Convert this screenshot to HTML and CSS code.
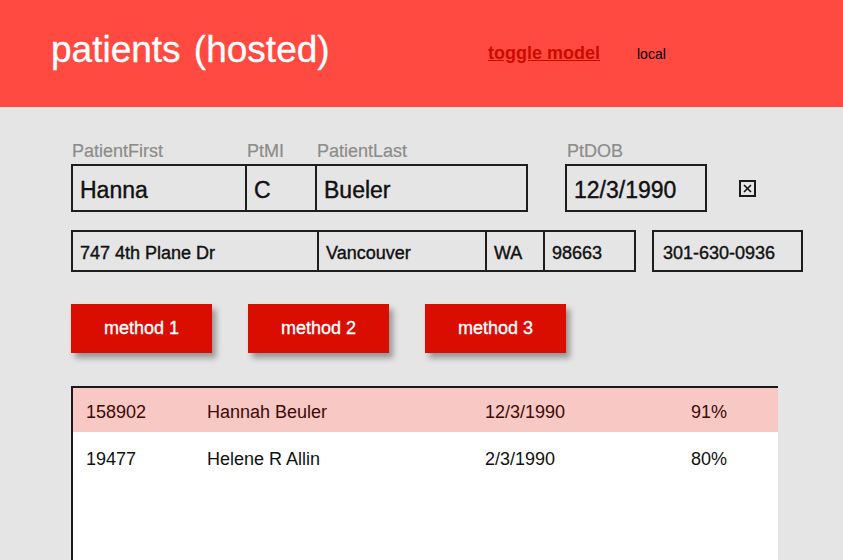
FILE: index.html
```html
<!DOCTYPE html>
<html>
<head>
<meta charset="utf-8">
<link rel="stylesheet" href="styles.css">
</head>
<body>
<header class="topbar">
  <h1 class="title">patients (hosted)</h1>
  <a class="toggle" href="#">toggle model</a>
  <span class="mode">local</span>
</header>
<main class="content">
  <div class="row row-names">
    <div class="group">
      <div class="field f-first"><label class="lbl">PatientFirst</label><div class="box big">Hanna</div></div>
      <div class="field f-mi"><label class="lbl">PtMI</label><div class="box big">C</div></div>
      <div class="field f-last"><label class="lbl">PatientLast</label><div class="box big">Bueler</div></div>
    </div>
    <div class="field f-dob"><label class="lbl">PtDOB</label><div class="box big">12/3/1990</div></div>
    <span class="check"><svg width="13" height="13" viewBox="0 0 13 13"><path d="M3 3 L10 10 M10 3 L3 10" stroke="#111" stroke-width="1.6" fill="none"/></svg></span>
  </div>
  <div class="row row-addr">
    <div class="group">
      <div class="box small a-street">747 4th Plane Dr</div>
      <div class="box small a-city">Vancouver</div>
      <div class="box small a-state">WA</div>
      <div class="box small a-zip">98663</div>
    </div>
    <div class="box small a-phone">301-630-0936</div>
  </div>
  <div class="buttons">
    <button class="btn">method 1</button>
    <button class="btn">method 2</button>
    <button class="btn">method 3</button>
  </div>
  <div class="results">
    <div class="res-row selected">
      <span class="c-id">158902</span><span class="c-name">Hannah Beuler</span><span class="c-dob">12/3/1990</span><span class="c-pct">91%</span>
    </div>
    <div class="res-row">
      <span class="c-id">19477</span><span class="c-name">Helene R Allin</span><span class="c-dob">2/3/1990</span><span class="c-pct">80%</span>
    </div>
  </div>
</main>
</body>
</html>
```

FILE: styles.css
```css
* { box-sizing: border-box; }
html, body { margin: 0; padding: 0; }
body {
  width: 843px;
  height: 560px;
  overflow: hidden;
  background: #e5e5e5;
  font-family: "Liberation Sans", Arial, Helvetica, sans-serif;
  color: #111;
}
.topbar {
  height: 107px;
  background: #ff4a41;
  display: flex;
  align-items: flex-start;
  padding-left: 51px;
}
.title {
  margin: 31px 0 0 0;
  font-size: 37px;
  line-height: 37px;
  font-weight: normal;
  color: #fff;
  word-spacing: 3px;
  width: 437px;
  -webkit-text-stroke: 0.3px #fff;
}
.toggle {
  margin-top: 44px;
  font-size: 18px;
  line-height: 18px;
  font-weight: bold;
  color: #cc0a00;
  text-decoration: underline;
  width: 149px;
}
.mode {
  margin-top: 47px;
  font-size: 14px;
  line-height: 14px;
  color: #000;
}
.content {
  padding: 34px 0 0 71px;
}
.row { display: flex; }
.row-names { align-items: flex-end; }
.group { display: flex; }
.group > * + * { margin-left: -2px; }
.field { display: flex; flex-direction: column; }
.lbl {
  font-size: 18px;
  line-height: 20px;
  color: #8c8c8c;
  margin: 0 0 3px 1px;
  -webkit-text-stroke: 0.2px #8c8c8c;
}
.box {
  border: 2px solid #1e1e1e;
  white-space: nowrap;
  overflow: hidden;
  -webkit-text-stroke: 0.4px #111;
}
.big {
  height: 48px;
  font-size: 23px;
  line-height: 26px;
  padding: 11px 0 0 7px;
}
.small {
  height: 42px;
  font-size: 18px;
  line-height: 20px;
  padding: 11px 0 0 7px;
}
.f-first { width: 176px; }
.f-mi { width: 72px; }
.f-mi .lbl { margin-left: 2px; }
.f-last { width: 213px; }
.f-last .lbl { margin-left: 2px; }
.f-dob { width: 142px; margin-left: 37px; }
.f-dob .lbl { margin-left: 2px; }
.check {
  width: 17px;
  height: 17px;
  border: 2px solid #1a1a1a;
  margin: 0 0 15px 32px;
  display: flex;
  align-items: center;
  justify-content: center;
}
.check svg { display: block; }
.row-addr { margin-top: 18px; }
.a-street { width: 248px; }
.a-city { width: 170px; }
.a-state { width: 60px; }
.a-zip { width: 93px; }
.a-phone { width: 151px; margin-left: 16px; padding-left: 9px; }
.buttons {
  display: flex;
  gap: 36px;
  margin-top: 32px;
}
.btn {
  width: 141px;
  height: 49px;
  border: none;
  background: #d90d00;
  color: #fff;
  font-family: "Liberation Sans", Arial, Helvetica, sans-serif;
  font-size: 18px;
  -webkit-text-stroke: 0.35px #fff;
  box-shadow: 4px 5px 6px rgba(0, 0, 0, 0.35);
  padding: 0;
}
.results {
  margin-top: 33px;
  width: 707px;
  height: 200px;
  background: #fff;
  border-top: 2px solid #1a1a1a;
  border-left: 2px solid #1a1a1a;
}
.res-row {
  display: flex;
  height: 46px;
  padding: 15px 0 0 13px;
  font-size: 18px;
  line-height: 20px;
  color: #111;
}
.res-row.selected {
  background: #f8c8c4;
  color: #3b0a08;
  height: 44px;
  padding-top: 14px;
}
.res-row + .res-row { height: 47px; padding-top: 17px; }
.c-id { width: 121px; }
.c-name { width: 278px; }
.c-dob { width: 206px; }
```
